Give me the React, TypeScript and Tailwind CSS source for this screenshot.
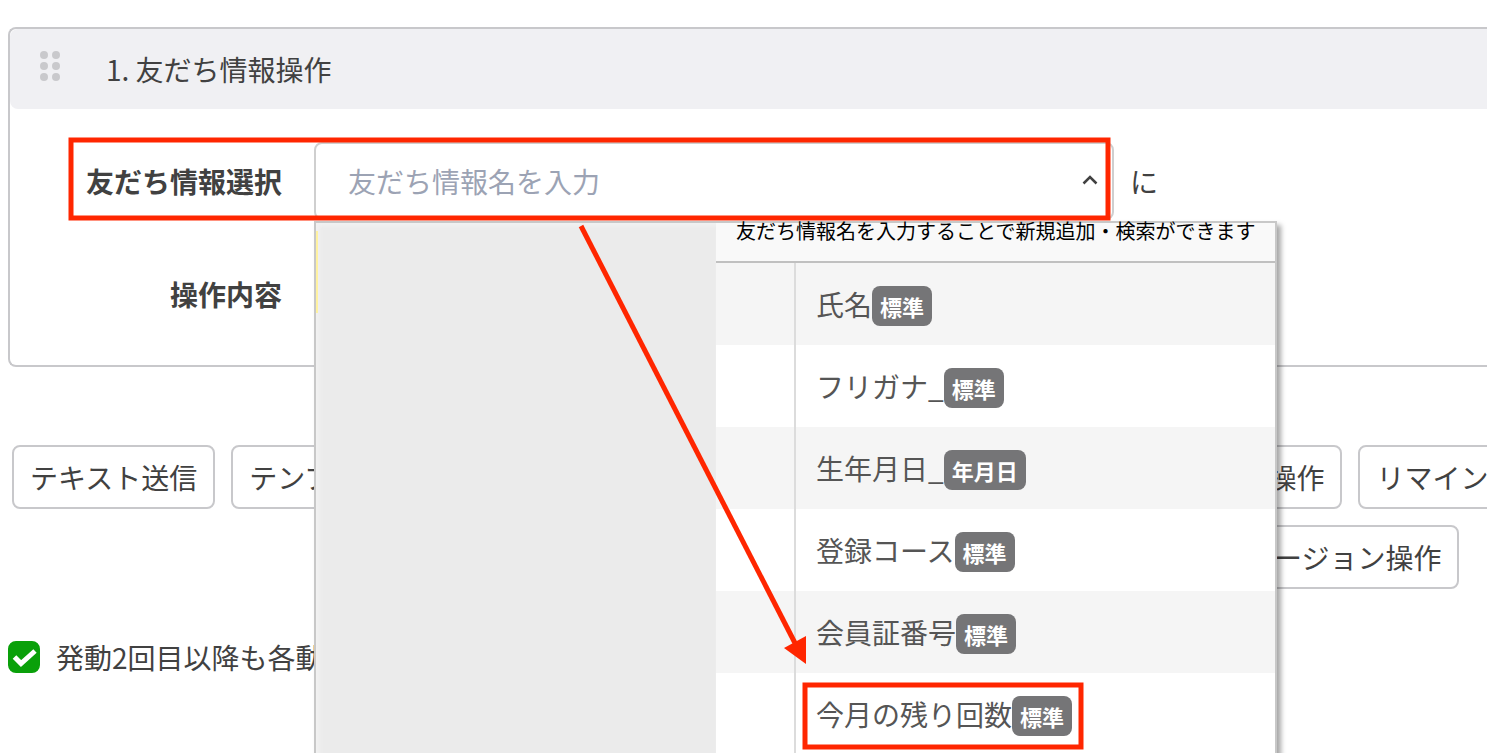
import { useState } from "react";

interface FriendField {
  name: string;
  type: string;
}

const FIELDS: FriendField[] = [
  { name: "氏名", type: "標準" },
  { name: "フリガナ_", type: "標準" },
  { name: "生年月日_", type: "年月日" },
  { name: "登録コース", type: "標準" },
  { name: "会員証番号", type: "標準" },
  { name: "今月の残り回数", type: "標準" },
];

const ACTIONS = [
  "テキスト送信",
  "テンプレート送信",
  "タグ操作",
  "友だち情報操作",
  "シナリオ操作",
  "メニュー操作",
  "リマインダ操作",
];

const MORE_ACTIONS = ["イベント予約操作", "コンバージョン操作"];

function ActionButton({ label }: { label: string }) {
  return (
    <button
      type="button"
      className="h-16 shrink-0 whitespace-nowrap rounded-lg border-2 border-[#c8c8cb] bg-white px-4"
    >
      {label}
    </button>
  );
}

function DragHandle() {
  return (
    <svg width="20" height="30" viewBox="0 0 20 30" fill="#c9c9cc" aria-hidden="true">
      {[4, 15, 26].map((y) => (
        <g key={y}>
          <circle cx="4" cy={y} r="4" />
          <circle cx="16" cy={y} r="4" />
        </g>
      ))}
    </svg>
  );
}

function FieldDropdown() {
  return (
    <div className="absolute left-0 top-[79px] z-10 flex w-[963px] border-2 border-[#c8c8c8] bg-white shadow-[4px_4px_5px_rgba(0,0,0,0.35)]">
      <div className="flex w-[400px] shrink-0 bg-[#ebebeb] shadow-[inset_3px_3px_4px_#f2f2f2]">
        <div className="mt-2 h-[82px] w-[2px] bg-[#fff2a0]" />
      </div>
      <div className="min-w-0 flex-1">
        <p className="h-10 whitespace-nowrap border-b-2 border-[#c0c0c0] bg-[#f9f9f9] pl-5 text-[20px] leading-4 text-black">
          友だち情報名を入力することで新規追加・検索ができます
        </p>
        <ul role="listbox" aria-label="友だち情報">
          {FIELDS.map((field) => (
            <li
              key={field.name}
              role="option"
              aria-selected={false}
              className="flex h-[82px] odd:bg-[#f5f5f5] even:bg-white"
            >
              <div className="w-20 shrink-0 border-r-2 border-[#dcdcdc]" />
              <div className="flex items-center pl-5 text-[#555]">
                <span>{field.name}</span>
                <span className="mt-1 h-10 rounded-lg bg-[#757577] px-2 pt-1 text-[22px] font-bold leading-8 text-white">
                  {field.type}
                </span>
              </div>
            </li>
          ))}
        </ul>
      </div>
    </div>
  );
}

// Red guide marks drawn over the form
function GuideMarks() {
  return (
    <svg
      className="pointer-events-none absolute left-0 top-0 z-20"
      width="1120"
      height="753"
      viewBox="0 0 1120 753"
      fill="none"
      aria-hidden="true"
    >
      <rect x="71" y="140" width="1037" height="78" stroke="#ff2600" strokeWidth="5" />
      <rect x="805" y="685" width="276" height="62" stroke="#ff2600" strokeWidth="5" />
      <path d="M581 226L796 645" stroke="#ff2600" strokeWidth="5" />
      <path d="M784 648L806 636L806 664Z" fill="#ff2600" />
    </svg>
  );
}

export default function App() {
  const [open, setOpen] = useState(true);
  const [repeat, setRepeat] = useState(true);
  const [query, setQuery] = useState("");

  return (
    <div className="relative h-screen overflow-hidden bg-white pl-2 pt-[27px] font-['Noto_Sans_CJK_JP',sans-serif] text-[28px] leading-[42px] text-[#414141]">
      <section className="rounded-l-lg border-2 border-r-0 border-[#c8c8cb]">
        <header className="flex h-20 items-center gap-[46px] rounded-l-lg bg-[#f0f0f3] pl-[30px]">
          <div className="pb-1.5">
            <DragHandle />
          </div>
          <h2>1. 友だち情報操作</h2>
        </header>

        <div className="pb-[50px] pt-[33px]">
          <div className="flex items-center">
            <label htmlFor="friend-field" className="w-[272px] shrink-0 text-right font-bold">
              友だち情報選択
            </label>
            <div className="relative ml-8 flex h-[78px] w-[800px] items-center rounded-lg border-2 border-[#cfcfcf] bg-white">
              <input
                id="friend-field"
                type="text"
                value={query}
                onChange={(e) => setQuery(e.target.value)}
                placeholder="友だち情報名を入力"
                className="h-full min-w-0 flex-1 bg-transparent pl-8 outline-none placeholder:text-[#9ca3b4]"
              />
              <button
                type="button"
                aria-label="候補を閉じる"
                onClick={() => setOpen(!open)}
                className="mr-2.5"
              >
                <svg width="24" height="24" viewBox="0 0 24 24" fill="none" stroke="#414141" strokeWidth="2.5">
                  <path d="M5.500 14.500L12 8L18.500 14.500" />
                </svg>
              </button>
              {open && (
                <div className="absolute -left-0.5 -top-0.5">
                  <FieldDropdown />
                </div>
              )}
            </div>
            <span className="ml-4">に</span>
          </div>
          <div className="mt-[53px] flex">
            <span className="w-[272px] text-right font-bold">操作内容</span>
          </div>
        </div>
      </section>

      <div className="mt-[78px] flex flex-col gap-4 pl-1">
        <div className="flex gap-4">
          {ACTIONS.map((label) => (
            <ActionButton key={label} label={label} />
          ))}
        </div>
        <div className="flex gap-4 pl-[884px]">
          {MORE_ACTIONS.map((label) => (
            <ActionButton key={label} label={label} />
          ))}
        </div>
      </div>

      <label className="mt-[47px] flex items-center gap-4">
        <span className="relative h-8 w-8">
          <input
            type="checkbox"
            checked={repeat}
            onChange={(e) => setRepeat(e.target.checked)}
            className="block h-8 w-8 appearance-none rounded-lg border-2 border-[#0aa00a] checked:bg-[#0aa00a]"
          />
          {repeat && (
            <svg
              className="pointer-events-none absolute left-0 top-0"
              width="32"
              height="32"
              viewBox="0 0 32 32"
              fill="none"
              aria-hidden="true"
            >
              <path d="M6.500 16L13 22.500L27 10" stroke="#fff" strokeWidth="5" />
            </svg>
          )}
        </span>
        <span>発動2回目以降も各動作を実行する</span>
      </label>

      <GuideMarks />
    </div>
  );
}
